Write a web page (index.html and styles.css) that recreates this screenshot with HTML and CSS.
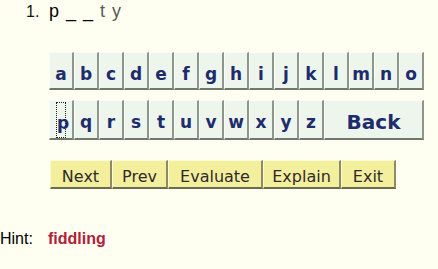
FILE: index.html
```html
<!DOCTYPE html>
<html lang="en">
<head>
    <meta charset="UTF-8">
    <title>Spelling Quiz</title>
    <link rel="stylesheet" href="styles.css">
</head>
<body>
    <div class="question">
        <span class="num">1.</span>
        <span class="word">p _ _ <span class="given">t y</span></span>
    </div>

    <div class="keyboard">
        <div class="key-row">
            <button class="key">a</button><button class="key">b</button><button class="key">c</button><button class="key">d</button><button class="key">e</button><button class="key">f</button><button class="key">g</button><button class="key">h</button><button class="key">i</button><button class="key">j</button><button class="key">k</button><button class="key">l</button><button class="key">m</button><button class="key">n</button><button class="key">o</button>
        </div>
        <div class="key-row">
            <button class="key focused"><span class="focus-ring">p</span></button><button class="key">q</button><button class="key">r</button><button class="key">s</button><button class="key">t</button><button class="key">u</button><button class="key">v</button><button class="key">w</button><button class="key">x</button><button class="key">y</button><button class="key">z</button><button class="key back">Back</button>
        </div>
    </div>

    <div class="actions">
        <button class="action next">Next</button><button class="action prev">Prev</button><button class="action evaluate">Evaluate</button><button class="action explain">Explain</button><button class="action exit">Exit</button>
    </div>

    <div class="hint">
        <span class="hint-label">Hint:</span>
        <span class="hint-word">fiddling</span>
    </div>
</body>
</html>
```

FILE: styles.css
```css
body {
    margin: 0;
    background-color: #fefff0;
    font-family: "Liberation Sans", Arial, sans-serif;
    width: 438px;
    height: 269px;
    overflow: hidden;
}
.question {
    display: flex;
    align-items: baseline;
    padding: 1px 0 0 26px;
    height: 27px;
}
.num {
    font-size: 16px;
    color: #111;
    width: 23px;
}
.word {
    font-size: 18px;
    color: #000;
    white-space: pre;
    word-spacing: 2px;
}
.given {
    color: #5a5a5a;
}
.keyboard {
    margin: 24px 0 0 49px;
    display: flex;
    flex-direction: column;
    gap: 10px;
}
.key-row {
    display: flex;
}
.key {
    width: 25px;
    height: 38px;
    box-sizing: border-box;
    margin: 0;
    padding: 11px 0 0 0;
    background-color: #eef5ec;
    border-top: 1px solid #fbfdf9;
    border-left: 1px solid #fbfdf9;
    border-right: 2px solid #8c968a;
    border-bottom: 2px solid #6f786d;
    font-family: "DejaVu Sans", sans-serif;
    font-weight: bold;
    font-size: 17px;
    color: #1c2c6c;
    display: flex;
    justify-content: center;
    align-items: flex-start;
}
.key-row + .key-row .key {
    height: 40px;
}
.back {
    width: 100px;
    font-size: 20px;
    padding-top: 9px;
}
.focus-ring {
    display: block;
    width: 10px;
    height: 36px;
    margin-top: -10px;
    padding-top: 10px;
    box-sizing: border-box;
    border: 1px dotted #222;
}
.actions {
    display: flex;
    margin: 20px 0 0 50px;
}
.action {
    height: 29px;
    box-sizing: border-box;
    margin: 0;
    padding: 4px 0 0 0;
    background-color: #f4ef9c;
    border-top: 1px solid #fdfbd6;
    border-left: 1px solid #fdfbd6;
    border-right: 2px solid #8f8a66;
    border-bottom: 2px solid #6c6a50;
    font-family: "DejaVu Sans", sans-serif;
    font-size: 16px;
    color: #2e2a2e;
}
.next { width: 62px; }
.prev { width: 56px; }
.evaluate { width: 95px; }
.explain { width: 78px; }
.exit { width: 55px; }
.hint {
    margin-top: 41px;
    font-size: 16px;
    display: flex;
}
.hint-label {
    color: #000;
    width: 48px;
}
.hint-word {
    color: #b2203a;
    font-weight: bold;
}
```
